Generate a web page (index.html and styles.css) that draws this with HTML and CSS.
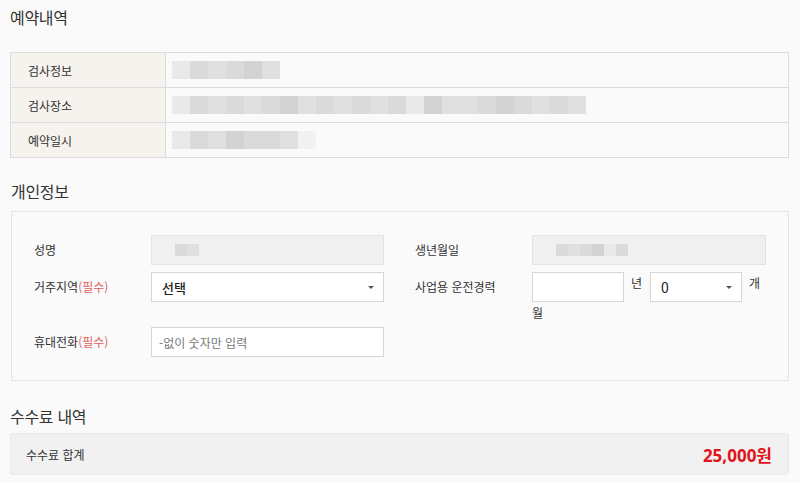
FILE: index.html
```html
<!DOCTYPE html>
<html lang="ko">
<head>
<meta charset="utf-8">
<title>예약내역</title>
<link rel="stylesheet" href="styles.css">
</head>
<body>
<div class="wrap">
  <h2 class="title t1">예약내역</h2>
  <table class="info">
    <tr>
      <th>검사정보</th>
      <td><div class="mosaic"><span class="c1"></span><span class="c3"></span><span class="c2"></span><span class="c3"></span><span class="c4"></span><span class="c2"></span></div></td>
    </tr>
    <tr>
      <th>검사장소</th>
      <td><div class="mosaic wide"><span class="c1"></span><span class="c3"></span><span class="c2"></span><span class="c3"></span><span class="c2"></span><span class="c3"></span><span class="c4"></span><span class="c2"></span><span class="c3"></span><span class="c2"></span><span class="c3"></span><span class="c2"></span><span class="c3"></span><span class="c1"></span><span class="c4"></span><span class="c2"></span><span class="c2"></span><span class="c3"></span><span class="c4"></span><span class="c3"></span><span class="c2"></span><span class="c3"></span><span class="c2"></span></div></td>
    </tr>
    <tr>
      <th>예약일시</th>
      <td><div class="mosaic"><span class="c1"></span><span class="c3"></span><span class="c2"></span><span class="c4"></span><span class="c3"></span><span class="c3"></span><span class="c2"></span><span class="c0"></span></div></td>
    </tr>
  </table>

  <h2 class="title t2">개인정보</h2>
  <div class="panel">
    <div class="grid">
      <div class="field">
        <div class="label">성명</div>
        <div class="ctrl"><div class="input readonly"><div class="mosaic small"><span class="c0"></span><span class="c3"></span><span class="c2"></span><span class="c0"></span></div></div></div>
      </div>
      <div class="field">
        <div class="label">생년월일</div>
        <div class="ctrl"><div class="input readonly"><div class="mosaic small"><span class="c0"></span><span class="c3"></span><span class="c2"></span><span class="c3"></span><span class="c4"></span><span class="c1"></span><span class="c3"></span><span class="c0"></span></div></div></div>
      </div>
      <div class="field">
        <div class="label">거주지역<span class="req">(필수)</span></div>
        <div class="ctrl"><div class="input select"><span class="val">선택</span><span class="arrow"></span></div></div>
      </div>
      <div class="field">
        <div class="label">사업용 운전경력</div>
        <div class="ctrl career"><span class="input short"></span><span class="unit u1">년</span><span class="input select short"><span class="val">0</span><span class="arrow"></span></span><span class="unit u2">개</span><span class="unit">월</span></div>
      </div>
      <div class="field">
        <div class="label">휴대전화<span class="req">(필수)</span></div>
        <div class="ctrl"><div class="input"><span class="ph">-없이 숫자만 입력</span></div></div>
      </div>
    </div>
  </div>

  <h2 class="title t3">수수료 내역</h2>
  <div class="fee">
    <span class="fee-label">수수료 합계</span>
    <span class="fee-amount">25,000원</span>
  </div>
</div>
</body>
</html>
```

FILE: styles.css
```css
* { box-sizing: border-box; }
body {
  margin: 0;
  background: #fafafa;
  color: #333;
  font-family: "Noto Sans CJK KR", "Noto Sans", sans-serif;
}
.wrap { padding: 0 11px 0 10px; }

.title {
  margin: 0;
  font-size: 16px;
  font-weight: normal;
  line-height: 20px;
  color: #333;
  letter-spacing: -0.3px;
}
.t1 { padding-top: 7px; }
.t2 { margin-top: 23px; padding-left: 1px; }
.t3 { margin-top: 25px; }

/* reservation table */
.info {
  width: 100%;
  margin-top: 25px;
  border-collapse: collapse;
  border: 1px solid #dcdcdc;
}
.info th, .info td {
  height: 35px;
  border-top: 1px solid #dcdcdc;
  padding: 0;
}
.info th {
  width: 155px;
  background: #f6f2ee;
  border-right: 1px solid #dcdcdc;
  text-align: left;
  font-weight: normal;
  font-size: 12px;
  padding-left: 17px;
  color: #333;
}
.info td { padding-left: 6px; }

.mosaic { display: flex; height: 18px; }
.mosaic span { width: 18px; height: 18px; }
.mosaic .c0 { background: #f1f1f1; }
.mosaic .c1 { background: #e9e9e9; }
.mosaic .c2 { background: #e0e0e0; }
.mosaic .c3 { background: #dadada; }
.mosaic .c4 { background: #d3d3d3; }
.mosaic.small { height: 12px; }
.mosaic.small span { width: 12px; height: 12px; }

/* personal info panel */
.panel {
  margin-top: 10px;
  margin-left: 1px;
  border: 1px solid #e4e4e4;
  background: #fafafa;
  padding: 23px 22px 23px 22px;
}
.grid {
  display: grid;
  grid-template-columns: 350px 351px;
  column-gap: 31px;
  row-gap: 7px;
}
.field { display: flex; align-items: flex-start; }
.label {
  width: 117px;
  flex: none;
  font-size: 12px;
  line-height: 30px;
  color: #333;
}
.req { color: #e06262; }
.ctrl { flex: 1; min-width: 0; }

.input {
  display: flex;
  align-items: center;
  height: 30px;
  border: 1px solid #d6d6d6;
  background: #fff;
  padding: 0 10px;
  font-size: 12px;
}
.input.readonly { background: #f0f0f0; border-color: #e3e3e3; }
.input.readonly .mosaic { margin-left: 1px; }
.ph { color: #777; margin-left: -3px; }
.select { position: relative; }
.select .val { font-size: 13px; color: #222; font-weight: 500; }
.arrow {
  position: absolute;
  right: 9px;
  top: 13px;
  width: 0;
  height: 0;
  border-left: 3px solid transparent;
  border-right: 3px solid transparent;
  border-top: 3px solid #555;
}

.career {
  font-size: 12px;
  line-height: 18px;
  color: #333;
  margin-bottom: -2px;
}
.career .input.short {
  display: inline-flex;
  width: 92px;
  vertical-align: top;
}
.career .short .val { font-weight: normal; font-size: 14px; }
.career .unit { display: inline; vertical-align: -2px; }
.u1 { margin-left: 7px; margin-right: 8px; }
.u2 { margin-left: 7px; }

/* fee */
.fee {
  margin-top: 7px;
  height: 42px;
  background: #f1f1f1;
  border: 1px solid #e8e8e8;
  border-radius: 3px;
  display: flex;
  align-items: center;
  justify-content: space-between;
  padding: 0 16px 0 15px;
}
.fee-label { font-size: 12px; color: #333; }
.fee-amount {
  font-family: "Noto Sans", "Noto Sans CJK KR", sans-serif;
  font-weight: bold;
  font-size: 17px;
  color: #e2141b;
}
```
